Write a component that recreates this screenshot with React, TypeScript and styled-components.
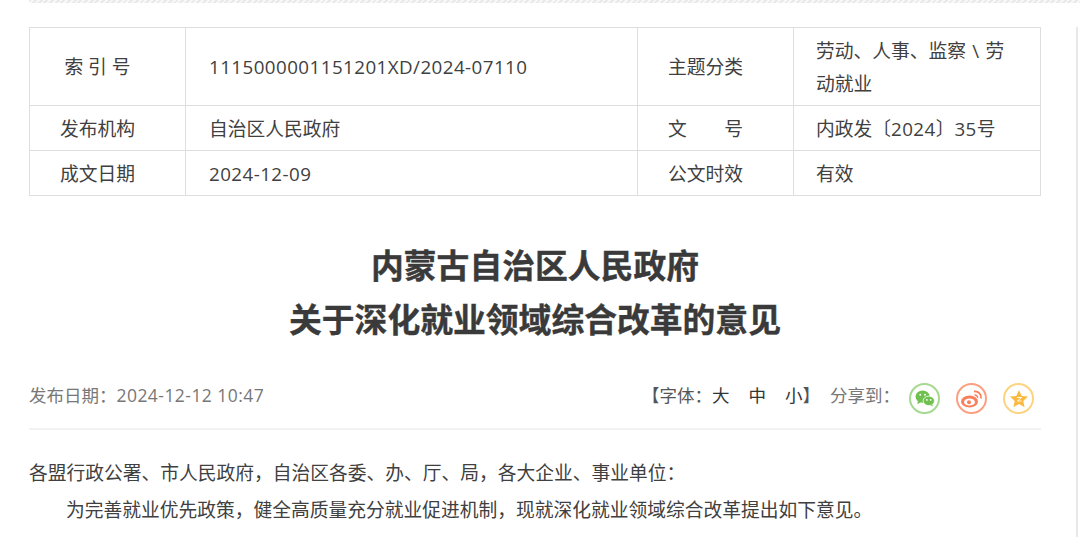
import React from "react";
import styled, { createGlobalStyle } from "styled-components";

const GlobalStyle = createGlobalStyle`
    html, body {
        margin: 0;
        padding: 0;
        background: #fff;
        overflow: hidden;
    }
    body {
        font-family: "Open Sans", "Noto Sans CJK SC", "Liberation Sans", sans-serif;
        color: #444;
    }
`;

const Page = styled.div`
    width: 1080px;
    height: 537px;
    overflow: hidden;
    padding-left: 29px;
    box-sizing: border-box;
`;
const Hatch = styled.div`
    height: 3px;
    background: repeating-linear-gradient(135deg, #e9e9e9 0 2px, #f8f8f8 2px 4px);
`;
const Columns = styled.div`
    display: flex;
    height: 534px;
    padding-top: 24px;
    box-sizing: border-box;
`;
const Content = styled.div`
    width: 1012px;
    flex-shrink: 0;
`;
const SideRule = styled.div`
    margin-left: 35px;
    border-left: 2px solid #e8e8e8;
`;
const InfoTable = styled.table`
    width: 1011px;
    table-layout: fixed;
    border-collapse: collapse;
    font-size: 18.75px;
    color: #404040;

    td {
        border: 1px solid #dedede;
        padding: 0;
        line-height: 33px;
    }
`;
const LabelCell = styled.td`
    text-align: center;
    padding-right: 20px !important;
`;
const ValueCell = styled.td<{ $tight?: boolean }>`
    padding: 0 23px 0 ${(p) => (p.$tight ? 22 : 23)}px !important;
    word-spacing: ${(p) => (p.$tight ? 1.5 : 0)}px;
`;
const Num = styled.span`
    letter-spacing: 0.45px;
`;
const Row = styled.tr<{ $h: number }>`
    height: ${(p) => p.$h}px;
`;
const Title = styled.h1`
    margin: 43px 0 0;
    text-align: center;
    font-size: 32.8px;
    line-height: 54px;
    font-weight: 700;
    color: #3a3a3a;
    -webkit-text-stroke: 0.4px #3a3a3a;
`;
const MetaBar = styled.div`
    margin-top: 15px;
    height: 64px;
    padding-bottom: 2px;
    display: flex;
    justify-content: space-between;
    align-items: center;
    border-bottom: 2px solid #f2f2f2;
    font-size: 17.5px;
    color: #777;
`;
const MetaRight = styled.div`
    display: flex;
    align-items: center;
    padding-right: 7px;
`;
const FontSizes = styled.span`
    color: #555;
    margin-right: 10px;
`;
const Size = styled.span`
    color: #333;
    & + & {
        margin-left: 19px;
    }
`;
const ShareLabel = styled.span`
    margin-right: 9px;
`;
const ShareGroup = styled.div`
    display: flex;
    gap: 16px;
    margin-top: 9px;
`;
const ShareIcon = styled.span<{ $c: string }>`
    width: 31px;
    height: 31px;
    box-sizing: border-box;
    border: 2px solid ${(p) => p.$c};
    border-radius: 50%;
    display: flex;
    align-items: center;
    justify-content: center;
`;
const Body = styled.div`
    margin-top: 24px;
    font-size: 18.75px;
    line-height: 37px;
    color: #404040;
`;
const Para = styled.p<{ $indent?: boolean }>`
    margin: 0;
    text-indent: ${(p) => (p.$indent ? "37px" : "0")};
`;

const App = (): JSX.Element => {
    return (
        <>
            <GlobalStyle />
            <Page>
                <Hatch />
                <Columns>
                    <Content>
                        <InfoTable>
                            <colgroup>
                                <col style={{ width: 156 }} />
                                <col style={{ width: 452 }} />
                                <col style={{ width: 156 }} />
                                <col style={{ width: 247 }} />
                            </colgroup>
                            <tbody>
                                <Row $h={78}>
                                    <LabelCell>索 引 号</LabelCell>
                                    <ValueCell>
                                        <Num>1115000001151201XD/2024-07110</Num>
                                    </ValueCell>
                                    <LabelCell>主题分类</LabelCell>
                                    <ValueCell $tight>劳动、人事、监察 \ 劳动就业</ValueCell>
                                </Row>
                                <Row $h={45}>
                                    <LabelCell>发布机构</LabelCell>
                                    <ValueCell>自治区人民政府</ValueCell>
                                    <LabelCell>文&emsp;&emsp;号</LabelCell>
                                    <ValueCell $tight>
                                        内政发〔<Num>2024</Num>〕<Num>35</Num>号
                                    </ValueCell>
                                </Row>
                                <Row $h={45}>
                                    <LabelCell>成文日期</LabelCell>
                                    <ValueCell>
                                        <Num>2024-12-09</Num>
                                    </ValueCell>
                                    <LabelCell>公文时效</LabelCell>
                                    <ValueCell $tight>有效</ValueCell>
                                </Row>
                            </tbody>
                        </InfoTable>
                        <Title>
                            内蒙古自治区人民政府
                            <br />
                            关于深化就业领域综合改革的意见
                        </Title>
                        <MetaBar>
                            <span>
                                发布日期：<Num>2024-12-12 10:47</Num>
                            </span>
                            <MetaRight>
                                <FontSizes>
                                    【字体：<Size>大</Size>
                                    <Size>中</Size>
                                    <Size>小</Size>】
                                </FontSizes>
                                <ShareLabel>分享到：</ShareLabel>
                                <ShareGroup>
                                    <ShareIcon $c="#a5d98f">
                                        <svg width="20" height="17" viewBox="0 0 21 18">
                                            <ellipse cx="8" cy="7" rx="7.5" ry="6.5" fill="#6fc04f" />
                                            <path d="M3 11.5L2.5 15l3.5-2z" fill="#6fc04f" />
                                            <ellipse cx="14.5" cy="11.5" rx="6" ry="5" fill="#6fc04f" stroke="#fff" strokeWidth="0.8" />
                                            <path d="M18 15l1 2.5-3-1.5z" fill="#6fc04f" />
                                            <circle cx="5.5" cy="5" r="1" fill="#fff" />
                                            <circle cx="10.5" cy="5" r="1" fill="#fff" />
                                            <circle cx="12.5" cy="10.5" r="0.9" fill="#fff" />
                                            <circle cx="16.5" cy="10.5" r="0.9" fill="#fff" />
                                        </svg>
                                    </ShareIcon>
                                    <ShareIcon $c="#fb9f82">
                                        <svg width="23" height="20" viewBox="0 0 23 20" fill="none">
                                            <ellipse cx="9.5" cy="12.5" rx="8.5" ry="6" fill="#f9805a" />
                                            <ellipse cx="9.5" cy="13" rx="5.5" ry="3.6" fill="#fff" />
                                            <circle cx="9" cy="13.2" r="2" fill="#f9805a" />
                                            <path d="M14 2.5a6 6 0 0 1 7 7" stroke="#f9805a" strokeWidth="1.8" />
                                            <path d="M14.5 6a2.5 2.5 0 0 1 3 3" stroke="#f9805a" strokeWidth="1.5" />
                                        </svg>
                                    </ShareIcon>
                                    <ShareIcon $c="#fdd37f">
                                        <svg width="20" height="19" viewBox="0 0 20 19">
                                            <path d="M10 1l2.7 5.9 6.3.7-4.7 4.3 1.3 6.3-5.6-3.2-5.6 3.2 1.3-6.3L1 7.6l6.3-.7z" fill="#fbb93f" />
                                            <path d="M8 8.5h4.5l-4 3.5h4" stroke="#fff" strokeWidth="0.9" fill="none" />
                                        </svg>
                                    </ShareIcon>
                                </ShareGroup>
                            </MetaRight>
                        </MetaBar>
                        <Body>
                            <Para>各盟行政公署、市人民政府，自治区各委、办、厅、局，各大企业、事业单位：</Para>
                            <Para $indent>为完善就业优先政策，健全高质量充分就业促进机制，现就深化就业领域综合改革提出如下意见。</Para>
                        </Body>
                    </Content>
                    <SideRule />
                </Columns>
            </Page>
        </>
    );
};

export default App;
